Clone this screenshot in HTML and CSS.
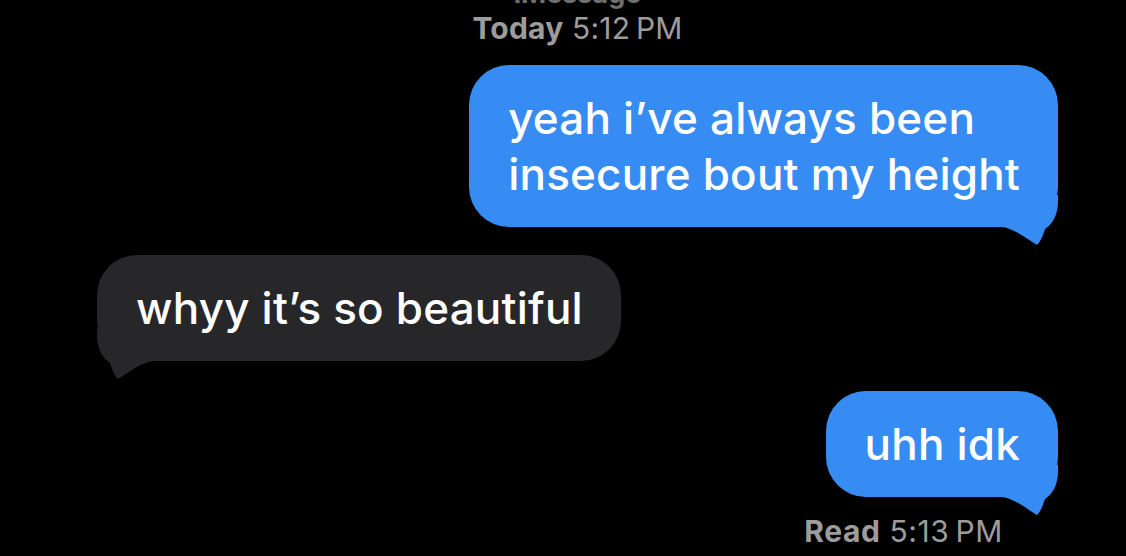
FILE: index.html
```html
<!DOCTYPE html>
<html lang="en">
<head>
<meta charset="utf-8">
<title>Messages</title>
<link rel="stylesheet" href="styles.css">
</head>
<body>
<main class="thread">
  <div class="service">iMessage</div>
  <div class="stamp"><b>Today</b> 5:12&#8239;PM</div>

  <div class="bubble out first">
    <span class="text">yeah i’ve always been<br>insecure bout my height</span>
    <svg class="tail" viewBox="0 0 56 50" width="56" height="50" aria-hidden="true"><path d="M0,0 H56 V6 C56,22 49,30 43,34 C41,40 39,46 35,50 C26,45 14,34 0,32 Z"/></svg>
  </div>

  <div class="bubble in">
    <span class="text">whyy it’s so beautiful</span>
    <svg class="tail" viewBox="0 0 56 50" width="56" height="50" aria-hidden="true"><path d="M0,0 H56 V6 C56,22 49,30 43,34 C41,40 39,46 35,50 C26,45 14,34 0,32 Z"/></svg>
  </div>

  <div class="bubble out last">
    <span class="text">uhh idk</span>
    <svg class="tail" viewBox="0 0 56 50" width="56" height="50" aria-hidden="true"><path d="M0,0 H56 V6 C56,22 49,30 43,34 C41,40 39,46 35,50 C26,45 14,34 0,32 Z"/></svg>
  </div>

  <div class="receipt"><b>Read</b> 5:13&#8239;PM</div>
</main>
</body>
</html>
```

FILE: styles.css
```css
html, body {
  margin: 0;
  padding: 0;
  background: #000;
  height: 100%;
  overflow: hidden;
}

.thread {
  display: flex;
  flex-direction: column;
  padding: 0 68px 0 97px;
  font-family: Inter, "Noto Sans", "Liberation Sans", sans-serif;
  color: #fff;
}

.service {
  align-self: center;
  margin-top: -19px;
  height: 26px;
  font-size: 27px;
  font-weight: 700;
  color: #6f6f6f;
  line-height: 26px;
}

.stamp,
.receipt {
  font-size: 30px;
  line-height: 34px;
  color: #9c9c9c;
  letter-spacing: 0.2px;
}
.stamp b,
.receipt b {
  font-weight: 700;
}

.stamp {
  align-self: center;
  margin-top: 4px;
}

.bubble {
  position: relative;
  padding: 25px 38px 25px 39px;
  border-radius: 40px;
  font-size: 44px;
  font-weight: 500;
  line-height: 56px;
  letter-spacing: 0.2px;
}

.bubble.out {
  align-self: flex-end;
  background: #368cf2;
  fill: #368cf2;
}

.bubble.in {
  align-self: flex-start;
  background: #27272a;
  fill: #27272a;
}

.bubble.first {
  margin-top: 20px;
}

.bubble.in {
  margin-top: 28px;
}

.bubble.last {
  margin-top: 30px;
}

.tail {
  position: absolute;
  bottom: -18px;
  right: 0;
  display: block;
}

.bubble.in .tail {
  right: auto;
  left: 0;
  transform: scaleX(-1);
}

.receipt {
  align-self: flex-end;
  margin-right: 55px;
  margin-top: 17px;
  letter-spacing: 0.6px;
}
```
